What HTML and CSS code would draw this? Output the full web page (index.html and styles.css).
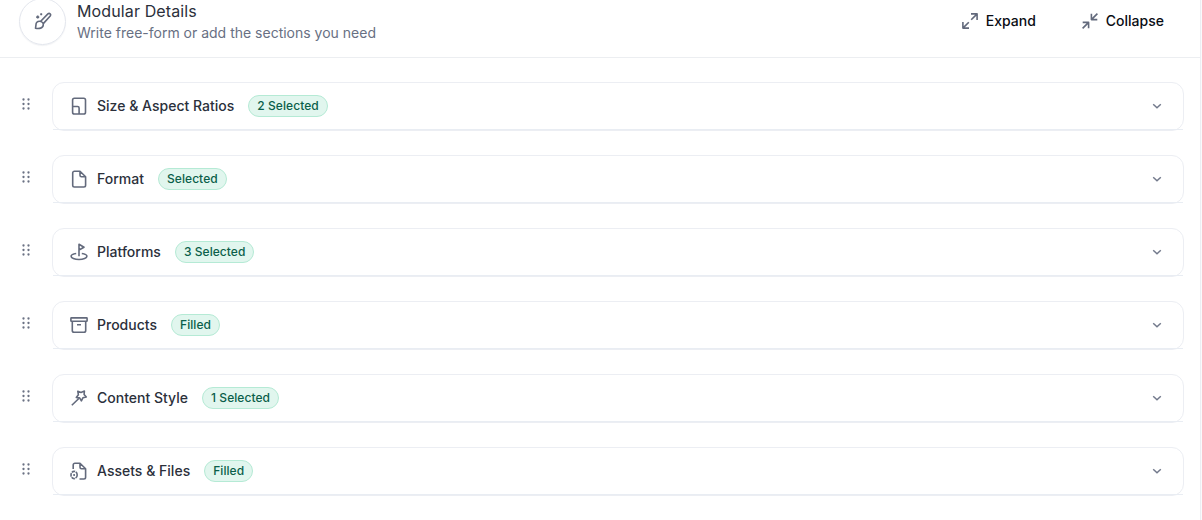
FILE: index.html
```html
<!DOCTYPE html>
<html lang="en">

<head>
    <meta charset="UTF-8">
    <meta name="viewport" content="width=device-width, initial-scale=1.0">
    <title>Modular Details</title>
    <link rel="stylesheet" href="styles.css">
</head>

<body>
    <svg class="sprite" width="0" height="0">
        <symbol id="grip" viewBox="0 0 8 12">
            <g fill="currentColor">
                <circle cx="1.5" cy="1.5" r="1.15" /><circle cx="6.5" cy="1.5" r="1.15" />
                <circle cx="1.5" cy="6" r="1.15" /><circle cx="6.5" cy="6" r="1.15" />
                <circle cx="1.5" cy="10.5" r="1.15" /><circle cx="6.5" cy="10.5" r="1.15" />
            </g>
        </symbol>
        <symbol id="chevron" viewBox="0 0 10 10">
            <path d="M1.2 3.2 5 6.7 8.8 3.2" />
        </symbol>
    </svg>

    <main class="panel">
        <header class="header">
            <div class="header-icon">
                <svg class="icon" width="18" height="18" viewBox="0 0 18 18">
                    <path d="M6.7 9.3 13.9 1.9q1.2-1 2.2-.1t.1 2.2L9.3 11.6M5.4 9.2C3.3 9.2 1.9 10.9 2 12.6L1.5 16.3C5 16.9 9.2 16.4 9.3 12.8 9.3 10.8 7.6 9.2 5.4 9.2Z" />
                    <path d="M3.7 3.6v3M2.2 5.1h3M7.2 1.2v2M6.2 2.2h2" />
                </svg>
            </div>
            <div class="header-text">
                <h1>Modular Details</h1>
                <p>Write free-form or add the sections you need</p>
            </div>
            <div class="actions">
                <button type="button">
                    <svg class="icon" width="18" height="18" viewBox="0 0 18 18">
                        <path d="M10 1.9h6.1V8M16.1 1.9 10.2 7.8M1.9 10v6.1H8M1.9 16.1l5.9-5.9" />
                    </svg>
                    Expand
                </button>
                <button type="button">
                    <svg class="icon" width="18" height="18" viewBox="0 0 18 18">
                        <path d="M10.4 1.7v5.9h5.9M10.4 7.6l6-6M1.7 10.4h5.9v5.9M7.6 10.4l-6 6" />
                    </svg>
                    Collapse
                </button>
            </div>
        </header>

        <div class="sections">
            <div class="row">
                <svg class="grip"><use href="#grip" /></svg>
                <div class="card">
                    <div class="card-head">
                        <svg class="icon" width="18" height="18" viewBox="0 0 18 18">
                            <rect x="2.6" y="1.2" width="12.9" height="15.8" rx="1.8" />
                            <path d="M2.6 9.5h5a1.5 1.5 0 0 1 1.5 1.5v6" />
                        </svg>
                        <span class="label">Size &amp; Aspect Ratios</span>
                        <span class="badge">2 Selected</span>
                        <svg class="chevron"><use href="#chevron" /></svg>
                    </div>
                </div>
            </div>
            <div class="row">
                <svg class="grip"><use href="#grip" /></svg>
                <div class="card">
                    <div class="card-head">
                        <svg class="icon" width="18" height="18" viewBox="0 0 18 18">
                            <path d="M10 1.2H4.4a1.7 1.7 0 0 0-1.7 1.7v12.4A1.7 1.7 0 0 0 4.4 17h9.5a1.7 1.7 0 0 0 1.7-1.7V6.8ZM10 1.2v4.1a1.5 1.5 0 0 0 1.5 1.5h4.1" />
                        </svg>
                        <span class="label">Format</span>
                        <span class="badge">Selected</span>
                        <svg class="chevron"><use href="#chevron" /></svg>
                    </div>
                </div>
            </div>
            <div class="row">
                <svg class="grip"><use href="#grip" /></svg>
                <div class="card">
                    <div class="card-head">
                        <svg class="icon" width="18" height="18" viewBox="0 0 18 18">
                            <path d="M9 13.2V1.2L14 4.2 9 7M6.2 10.5C3.2 10.9 1.1 12 1.1 13.3 1.1 15 4.6 16.5 9 16.5s7.9-1.5 7.9-3.2c0-1.3-2.1-2.4-5.1-2.8" />
                        </svg>
                        <span class="label">Platforms</span>
                        <span class="badge">3 Selected</span>
                        <svg class="chevron"><use href="#chevron" /></svg>
                    </div>
                </div>
            </div>
            <div class="row">
                <svg class="grip"><use href="#grip" /></svg>
                <div class="card">
                    <div class="card-head">
                        <svg class="icon" width="18" height="18" viewBox="0 0 18 18">
                            <rect x=".9" y="1.9" width="16.2" height="3.4" rx=".5" />
                            <path d="M2.3 5.3v9.2a1.8 1.8 0 0 0 1.8 1.8h9.8a1.8 1.8 0 0 0 1.8-1.8V5.3M7 8.7h4" />
                        </svg>
                        <span class="label">Products</span>
                        <span class="badge">Filled</span>
                        <svg class="chevron"><use href="#chevron" /></svg>
                    </div>
                </div>
            </div>
            <div class="row">
                <svg class="grip"><use href="#grip" /></svg>
                <div class="card">
                    <div class="card-head">
                        <svg class="icon" width="18" height="18" viewBox="0 0 18 18">
                            <path d="m7.8 2.2 3.2 1.2 3.4-1.3-.3 3.4 2.2 2.5-3.3.7-1.6 3.1-1.8-2.9-3.3-.4 2.1-2.7ZM8.6 9.7 1.8 16.3" />
                        </svg>
                        <span class="label">Content Style</span>
                        <span class="badge">1 Selected</span>
                        <svg class="chevron"><use href="#chevron" /></svg>
                    </div>
                </div>
            </div>
            <div class="row">
                <svg class="grip"><use href="#grip" /></svg>
                <div class="card">
                    <div class="card-head">
                        <svg class="icon" width="18" height="18" viewBox="0 0 18 18">
                            <path d="M3.2 7V2.9a1.7 1.7 0 0 1 1.7-1.7H10l5.6 5.6v8.5a1.7 1.7 0 0 1-1.7 1.7H9.5M10 1.2v4.1a1.5 1.5 0 0 0 1.5 1.5h4.1" />
                            <ellipse cx="4.1" cy="13" rx="3.1" ry="3.6" stroke-dasharray="3.6 .7" />
                            <path d="M4.1 12v2" />
                        </svg>
                        <span class="label">Assets &amp; Files</span>
                        <span class="badge">Filled</span>
                        <svg class="chevron"><use href="#chevron" /></svg>
                    </div>
                </div>
            </div>
        </div>
    </main>
</body>

</html>
```
FILE: styles.css
```css
* {
    box-sizing: border-box;
}

body {
    margin: 0;
    height: 520px;
    overflow: hidden;
    background: #fafafc;
    font-family: Inter, sans-serif;
    color: #2b303b;
}

.sprite {
    display: none;
}

.panel {
    margin: -16px 1px 0 -1px;
    height: 536px;
    background: white;
    border: 1px solid #eceef3;
    border-bottom: none;
    border-radius: 16px 16px 0 0;
}

.header {
    display: flex;
    align-items: center;
    height: 73px;
    padding: 0 36px 0 19px;
    border-bottom: 1px solid #eceef1;
}

.header-icon {
    display: flex;
    align-items: center;
    justify-content: center;
    width: 47px;
    height: 47px;
    margin-right: 11px;
    border: 1px solid #e3e6ed;
    border-radius: 50%;
    box-shadow: 0 1px 1px rgba(80, 90, 120, 0.08);
}

.icon {
    flex: none;
    fill: none;
    stroke: #636a7c;
    stroke-width: 1.6;
    stroke-linejoin: round;
}

h1 {
    margin: 0;
    font-size: 16px;
    font-weight: 400;
    line-height: 24px;
    letter-spacing: 0.12px;
}

p {
    margin: 0;
    font-size: 14px;
    line-height: 20px;
    color: #687083;
}

.actions {
    display: flex;
    gap: 45px;
    margin-left: auto;
}

button {
    display: flex;
    align-items: center;
    gap: 7px;
    padding: 0;
    border: none;
    background: none;
    font: 500 14px/20px Inter, sans-serif;
    color: #0a0d14;
}

.sections {
    display: grid;
    gap: 24px;
    padding: 24px 16px 0 22px;
}

.row {
    display: flex;
    gap: 22px;
}

.grip {
    width: 8px;
    height: 12px;
    margin-top: 16px;
    color: #6b7284;
}

.card {
    flex: 1;
    height: 49px;
    border: 1px solid #eceef3;
    border-radius: 12px;
}

.card-head {
    display: flex;
    align-items: center;
    height: 47px;
    padding: 0 21px 0 17px;
    border-bottom: 1px solid #e9edf3;
}

.label {
    margin: 0 14px 0 9px;
    font-size: 14px;
    font-weight: 500;
    line-height: 20px;
    letter-spacing: 0.01px;
}

.badge {
    height: 22px;
    padding: 0 8px;
    border: 1px solid #b5ead5;
    border-radius: 11px;
    background: #e1f6ee;
    font-size: 12px;
    font-weight: 500;
    line-height: 20px;
    letter-spacing: 0.06px;
    color: #0b5f4a;
}

.chevron {
    width: 10px;
    height: 10px;
    margin-left: auto;
    fill: none;
    stroke: #737a8c;
    stroke-width: 1.5;
}
```
